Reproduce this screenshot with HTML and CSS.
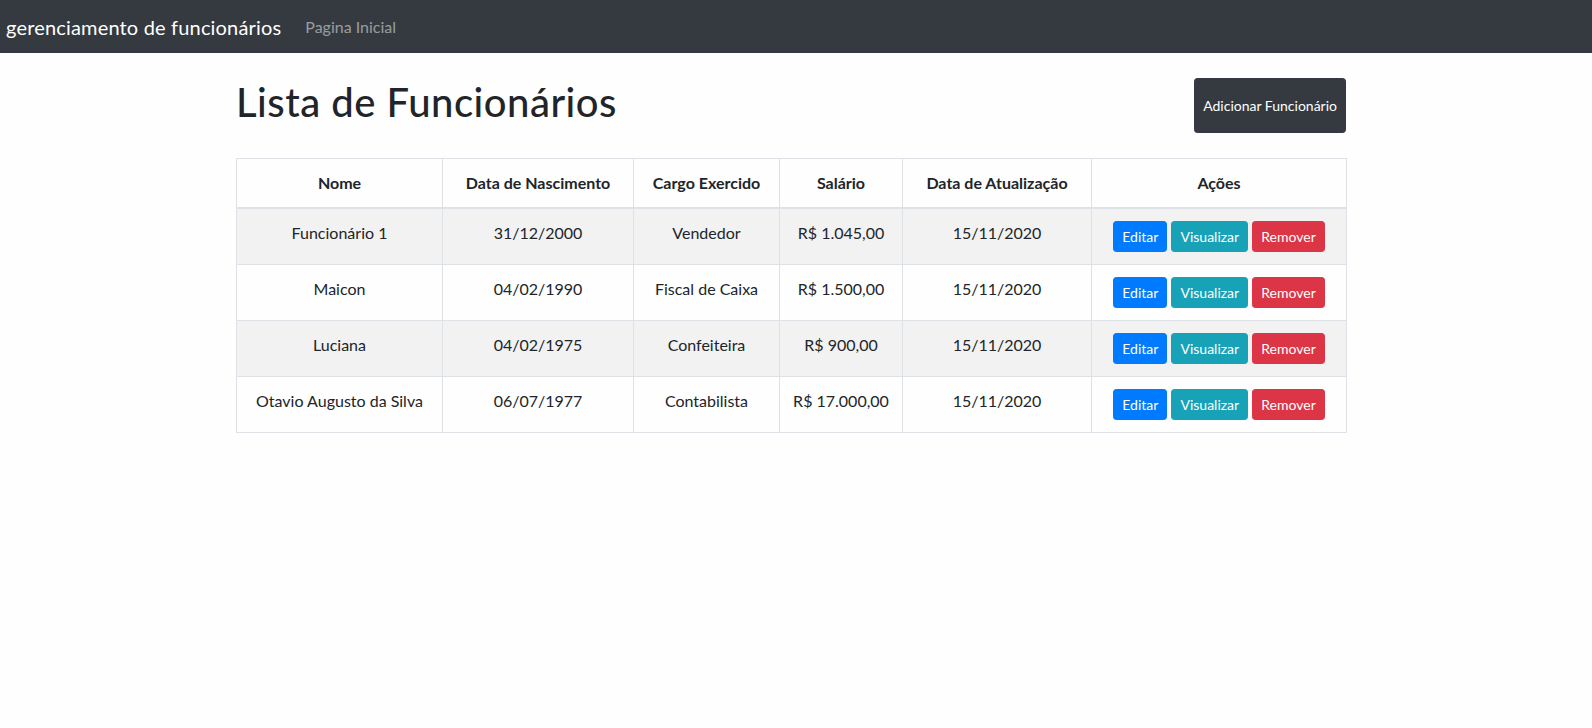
FILE: index.html
```html
<!DOCTYPE html>
<html lang="pt-BR">
<head>
<meta charset="utf-8">
<title>gerenciamento de funcionários</title>
<link rel="stylesheet" href="styles.css">
</head>
<body>
<nav class="navbar">
  <a class="brand" href="#">gerenciamento de funcionários</a>
  <a class="nav-link" href="#">Pagina Inicial</a>
</nav>
<main class="page">
  <div class="container">
    <div class="page-head">
      <h1>Lista de Funcionários</h1>
      <button class="btn btn-sm btn-dark">Adicionar Funcionário</button>
    </div>
    <table class="table">
      <colgroup>
        <col class="c1"><col class="c2"><col class="c3"><col class="c4"><col class="c5"><col class="c6">
      </colgroup>
      <thead>
        <tr>
          <th>Nome</th>
          <th>Data de Nascimento</th>
          <th>Cargo Exercido</th>
          <th>Salário</th>
          <th>Data de Atualização</th>
          <th>Ações</th>
        </tr>
      </thead>
      <tbody>
        <tr>
          <td>Funcionário 1</td>
          <td>31/12/2000</td>
          <td>Vendedor</td>
          <td>R$ 1.045,00</td>
          <td>15/11/2020</td>
          <td><button class="btn btn-sm btn-primary">Editar</button> <button class="btn btn-sm btn-info">Visualizar</button> <button class="btn btn-sm btn-danger">Remover</button></td>
        </tr>
        <tr>
          <td>Maicon</td>
          <td>04/02/1990</td>
          <td>Fiscal de Caixa</td>
          <td>R$ 1.500,00</td>
          <td>15/11/2020</td>
          <td><button class="btn btn-sm btn-primary">Editar</button> <button class="btn btn-sm btn-info">Visualizar</button> <button class="btn btn-sm btn-danger">Remover</button></td>
        </tr>
        <tr>
          <td>Luciana</td>
          <td>04/02/1975</td>
          <td>Confeiteira</td>
          <td>R$ 900,00</td>
          <td>15/11/2020</td>
          <td><button class="btn btn-sm btn-primary">Editar</button> <button class="btn btn-sm btn-info">Visualizar</button> <button class="btn btn-sm btn-danger">Remover</button></td>
        </tr>
        <tr>
          <td>Otavio Augusto da Silva</td>
          <td>06/07/1977</td>
          <td>Contabilista</td>
          <td>R$ 17.000,00</td>
          <td>15/11/2020</td>
          <td><button class="btn btn-sm btn-primary">Editar</button> <button class="btn btn-sm btn-info">Visualizar</button> <button class="btn btn-sm btn-danger">Remover</button></td>
        </tr>
      </tbody>
    </table>
  </div>
</main>
</body>
</html>
```
FILE: styles.css
```css
* { box-sizing: border-box; }
html, body { margin: 0; padding: 0; }
body {
  font-family: "Lato", "Segoe UI", "Open Sans", sans-serif;
  font-size: 16px;
  line-height: 1.5;
  color: #212529;
  background: #fefefe;
}
.navbar {
  display: flex;
  align-items: center;
  height: 53px;
  padding: 0 6px;
  background: #343a40;
}
.brand {
  font-size: 20px;
  line-height: 30px;
  letter-spacing: 0.17px;
  color: #fff;
  text-decoration: none;
  margin-right: 16px;
}
.nav-link {
  padding: 8px;
  font-size: 16px;
  color: rgba(255, 255, 255, 0.5);
  text-decoration: none;
}
.page {
  padding: 25px 10px 0 0;
}
.container {
  width: 1110px;
  margin: 0 auto;
}
.page-head {
  display: flex;
  justify-content: space-between;
  align-items: stretch;
  margin-bottom: 25px;
}
h1 {
  margin: 0 0 7px;
  font-size: 40px;
  font-weight: 500;
  line-height: 1.2;
  letter-spacing: 0.5px;
}
.btn {
  display: inline-block;
  font-family: inherit;
  font-weight: 400;
  text-align: center;
  border: 1px solid transparent;
  color: #fff;
  cursor: pointer;
}
.btn-sm {
  padding: 4px 8px;
  font-size: 14px;
  line-height: 1.5;
  border-radius: 3.2px;
}
.btn-dark { background: #343a40; border-color: #343a40; }
.btn-primary { background: #007bff; border-color: #007bff; }
.btn-info { background: #17a2b8; border-color: #17a2b8; }
.btn-danger { background: #dc3545; border-color: #dc3545; }
.table {
  width: 1110px;
  table-layout: fixed;
  border-collapse: collapse;
  text-align: center;
}
.c1 { width: 206px; }
.c2 { width: 191px; }
.c3 { width: 146px; }
.c4 { width: 123px; }
.c5 { width: 189px; }
.c6 { width: 255px; }
.table th, .table td {
  padding: 12px;
  border: 1px solid #dee2e6;
  vertical-align: top;
}
.table th {
  font-weight: 700;
  border-bottom-width: 2px;
}
.table tbody tr:nth-child(odd) {
  background: #f2f2f2;
}
```
